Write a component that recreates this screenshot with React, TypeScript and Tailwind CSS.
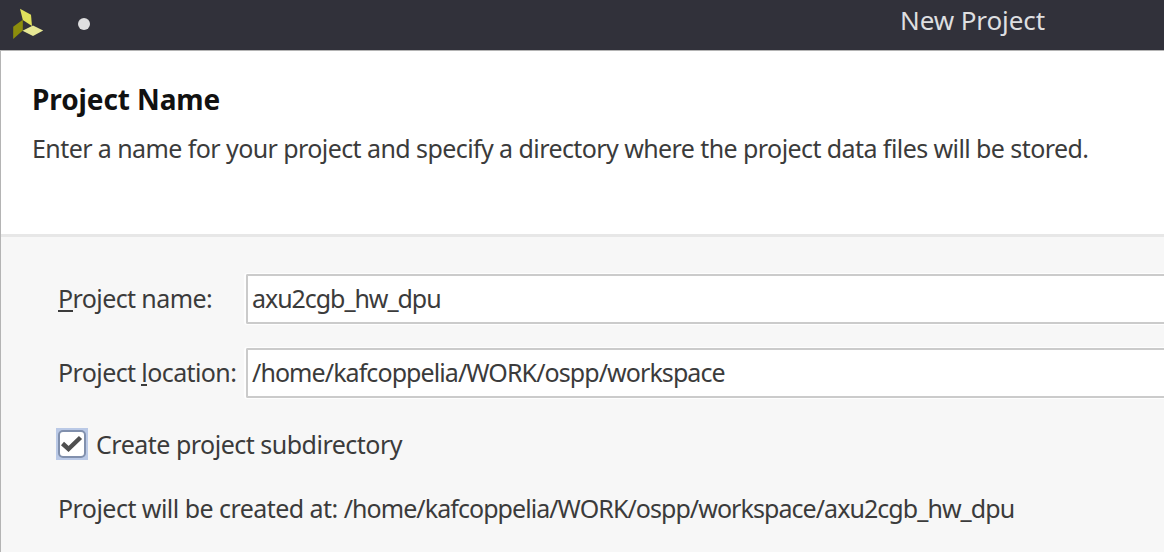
import React from "react";

function Logo() {
  return (
    <svg width="32" height="32" viewBox="0 0 32 32" className="ml-[12px] mt-[8px] shrink-0">
      <path d="M8 0.8L19 6.8L20 18L10.8 12Z" fill="#dfe05c" />
      <path d="M1.2 18.8L10.8 11.8V22.5L1.2 31Z" fill="#8c8d0c" />
      <path d="M10.5 22.8L21 17.6L31.2 22.5L21 28Z" fill="#e6e794" />
    </svg>
  );
}

function Mnemonic({ children }: { children: string }) {
  return <span className="inline-block h-[31px] border-b-2 border-[#3b3b3b]">{children}</span>;
}

function Field({ label, value, spacing }: { label: React.ReactNode; value: string; spacing: string }) {
  return (
    <div className="flex h-[52px] items-center">
      <div className="w-[187px] shrink-0 whitespace-nowrap pb-[2px] pl-px tracking-[-0.6px]">{label}</div>
      <div className={"flex h-[52px] flex-1 items-center rounded-l-[3px] border-2 border-r-0 border-white/80 " + spacing}>
        <div className="flex h-[50px] flex-1 shrink-0 items-center whitespace-nowrap rounded-l-[2px] border-2 border-r-0 border-[#cbcbcb] bg-white pb-[2px] pl-[4px]">
          {value}
        </div>
      </div>
    </div>
  );
}

export default function App() {
  return (
    <div className="flex h-[552px] w-[1164px] flex-col overflow-hidden bg-[#f7f7f7] font-['Noto_Sans',sans-serif] text-[25px] leading-[34px] text-[#3b3b3b]">
      <header className="flex h-[50px] shrink-0 bg-[#31313a]">
        <Logo />
        <span className="ml-[34px] mt-[18px] h-[12px] w-[12px] shrink-0 rounded-full bg-[#dededf]" />
        <h1 className="ml-[810px] mt-[3px] whitespace-nowrap text-[26px] tracking-[-0.1px] text-[#dedfe0]">New Project</h1>
      </header>
      <main className="flex flex-1 flex-col border-l border-t border-[#b4b4b4]">
        <section className="h-[186px] shrink-0 border-b-[3px] border-[#e7e7e7] bg-white pl-[31px] pt-[31px]">
          <h2 className="whitespace-nowrap text-[28px] font-bold tracking-[-0.1px] text-[#111]">Project Name</h2>
          <p className="mt-[15px] whitespace-nowrap tracking-[-0.58px]">
            Enter a name for your project and specify a directory where the project data files will be stored.
          </p>
        </section>
        <section className="flex flex-1 flex-col pl-[56px] pt-[36px]">
          <Field
            label={<><Mnemonic>P</Mnemonic>roject name:</>}
            value="axu2cgb_hw_dpu"
            spacing="tracking-[-1.05px]"
          />
          <div className="h-[22px] shrink-0" />
          <Field
            label={<>Project <Mnemonic>l</Mnemonic>ocation:</>}
            value="/home/kafcoppelia/WORK/ospp/workspace"
            spacing="tracking-[-0.92px]"
          />
          <div className="mt-[29px] flex h-[32px] shrink-0 items-center">
            <svg width="32" height="32" viewBox="0 0 32 32" className="-ml-px shrink-0">
              <rect width="32" height="32" fill="#bac9e6" />
              <rect x="3" y="3" width="26" height="26" rx="4" fill="#fff" stroke="#8190ad" strokeWidth="2" />
              <path d="M6.5 15.5L12.5 21L24.5 9.5" fill="none" stroke="#4f4f4f" strokeWidth="4.5" />
            </svg>
            <span className="ml-[8px] whitespace-nowrap tracking-[-0.5px]">Create project subdirectory</span>
          </div>
          <p className="mt-[31px] whitespace-nowrap pl-px tracking-[-0.54px]">
            Project will be created at:{" "}
            <span className="tracking-[-0.94px]">/home/kafcoppelia/WORK/ospp/workspace/axu2cgb_hw_dpu</span>
          </p>
        </section>
      </main>
    </div>
  );
}
